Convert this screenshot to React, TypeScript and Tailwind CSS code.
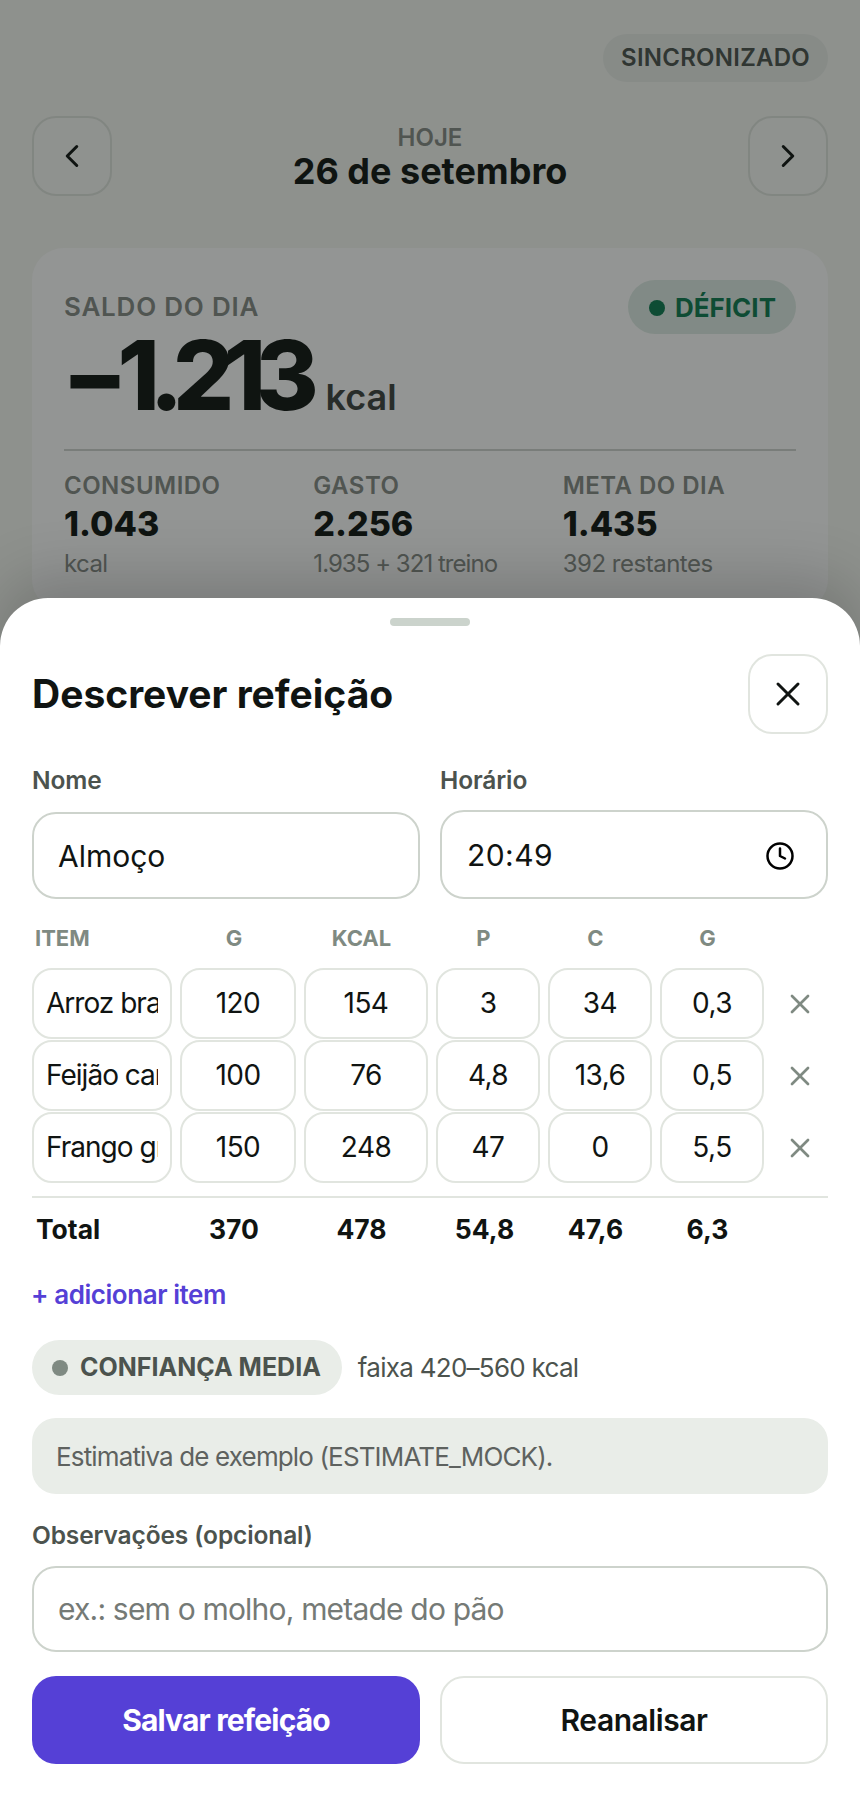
import { ChevronLeft, ChevronRight, Clock, X } from "lucide-react";

const font = "[font-family:Inter,'Liberation_Sans',sans-serif]";

const rows = [
  ["Arroz branco cozido", "120", "154", "3", "34", "0,3"],
  ["Feijão carioca", "100", "76", "4,8", "13,6", "0,5"],
  ["Frango grelhado", "150", "248", "47", "0", "5,5"],
];

const colsClass = "grid grid-cols-[140px_116px_124px_104px_104px_104px_1fr] gap-x-[8px]";

function Stat({ label, value, sub, subClass }: { label: string; value: string; sub: string; subClass: string }) {
  return (
    <div>
      <div className="text-[24px] leading-[30px] font-semibold tracking-[0.02em] text-[#868a86]">{label}</div>
      <div className="mt-[1px] text-[34px] leading-[44px] font-extrabold text-[#101412]">{value}</div>
      <div className={`mt-[3px] text-[24px] leading-[30px] text-[#868a86] ${subClass}`}>{sub}</div>
    </div>
  );
}

export default function App() {
  return (
    <div className={`relative h-[1800px] w-full overflow-hidden bg-[#f6f7f3] ${font}`}>
      <div className="px-[32px] pt-[34px]">
        <div className="flex justify-end">
          <span className="flex h-[48px] items-center rounded-full bg-[#e9ede8] px-[18px] text-[24px] font-semibold tracking-[0.01em] text-[#4c534e]">
            SINCRONIZADO
          </span>
        </div>
        <div className="mt-[34px] flex items-center justify-between">
          <button className="grid h-[80px] w-[80px] place-items-center rounded-[24px] border-2 border-[#dfe3dd] bg-[#f8f9f6] text-[#101412]">
            <ChevronLeft size={38} strokeWidth={1.9} />
          </button>
          <div className="pt-[4px] text-center">
            <div className="text-[24px] leading-[30px] font-semibold text-[#868a86]">HOJE</div>
            <div className="mt-[-4px] text-[36px] leading-[44px] font-bold text-[#101412]">26 de setembro</div>
          </div>
          <button className="grid h-[80px] w-[80px] place-items-center rounded-[24px] border-2 border-[#dfe3dd] bg-[#f8f9f6] text-[#101412]">
            <ChevronRight size={38} strokeWidth={1.9} />
          </button>
        </div>
        <div className="mt-[52px] rounded-[32px] bg-white px-[32px] pt-[32px] pb-[32px]">
          <div className="flex items-start justify-between">
            <div className="pt-[12px] text-[26px] leading-[30px] font-semibold tracking-[0.03em] text-[#868a86]">SALDO DO DIA</div>
            <span className="flex h-[54px] items-center gap-[10px] rounded-full bg-[#dfece5] pr-[20px] pl-[21px] pt-[1px] text-[26px] font-bold text-[#0d7a50]">
              <span className="h-[16px] w-[16px] rounded-full bg-[#0d7a50]" />
              DÉFICIT
            </span>
          </div>
          <div className="mt-[-1px] ml-[-2px] flex items-baseline gap-[17px]">
            <span className="text-[96px] leading-[84px] font-extrabold tracking-[-0.108em] text-[#101412]">−1.213</span>
            <span className="text-[36px] leading-none font-semibold text-[#3d423f]">kcal</span>
          </div>
          <div className="mt-[32px] h-[2px] bg-[#cfd3cf]" />
          <div className="mt-[20px] grid grid-cols-3 gap-x-[16px]">
            <Stat label="CONSUMIDO" value="1.043" sub="kcal" subClass="tracking-[-0.025em]" />
            <Stat label="GASTO" value="2.256" sub="1.935 + 321 treino" subClass="tracking-[-0.04em]" />
            <Stat label="META DO DIA" value="1.435" sub="392 restantes" subClass="tracking-[-0.02em]" />
          </div>
        </div>
      </div>

      {/* scrim over the page */}
      <div className="absolute inset-0 bg-[#0f1512]/45" />

      <div className="absolute inset-x-0 top-[598px] bottom-0 rounded-t-[48px] bg-white px-[32px] shadow-[0_-20px_60px_rgba(0,0,0,0.18)]">
        <div className="mx-auto mt-[20px] h-[8px] w-[80px] rounded-full bg-[#cbd3cc]" />
        <div className="mt-[28px] flex items-center justify-between">
          <h2 className="text-[39px] font-bold text-[#101412]">Descrever refeição</h2>
          <button className="grid h-[80px] w-[80px] place-items-center rounded-[24px] border-2 border-[#e1e5df] bg-white text-[#101412]">
            <X size={40} strokeWidth={1.8} />
          </button>
        </div>

        <div className="mt-[31px] grid grid-cols-2 gap-x-[20px]">
          <div className="flex flex-col">
            <label className="text-[24.5px] leading-[30px] font-semibold tracking-[-0.005em] text-[#4c534e]">Nome</label>
            <input
              readOnly
              value="Almoço"
              className="mt-auto h-[87px] w-full rounded-[24px] border-2 border-[#cdd3cc] bg-white px-[24px] text-[30px] text-[#101412] outline-none"
            />
          </div>
          <div className="flex flex-col">
            <label className="text-[24.5px] leading-[30px] font-semibold tracking-[-0.005em] text-[#4c534e]">Horário</label>
            <div className="relative mt-[15px]">
              <input
                readOnly
                value="20:49"
                className="h-[89px] w-full rounded-[24px] border-2 border-[#cdd3cc] bg-white px-[25px] text-[30px] tracking-[0.015em] text-[#101412] outline-none"
              />
              <Clock size={30} strokeWidth={2} className="absolute top-[31px] right-[33px] text-black" />
            </div>
          </div>
        </div>

        <div className={`${colsClass} mt-[24px] text-[22px] leading-[30px] font-bold text-[#7f8a82]`}>
          <div className="pl-[3px]">ITEM</div>
          <div className="pr-[8px] text-center">G</div>
          <div className="pr-[9px] text-center">KCAL</div>
          <div className="pr-[9px] text-center">P</div>
          <div className="pr-[9px] text-center">C</div>
          <div className="pr-[9px] text-center">G</div>
        </div>

        <div className="mt-[15px] flex flex-col gap-y-[1px]">
          {rows.map((r, i) => (
            <div key={i} className={`${colsClass} items-center`}>
              {r.map((v, j) => (
                <input
                  key={j}
                  readOnly
                  value={v}
                  className={`h-[71px] w-full rounded-[20px] border-2 border-[#e1e5df] bg-white px-[12px] pb-[2px] text-[28px] text-[#101412] outline-none ${j === 0 ? "text-left tracking-[-0.035em]" : "text-center tracking-[-0.02em]"}`}
                />
              ))}
              <div className="grid place-items-center text-[#7f8a82]">
                <X size={32} strokeWidth={2} />
              </div>
            </div>
          ))}
        </div>

        <div className="mt-[13px] h-[2px] bg-[#e1e5df]" />
        <div className={`${colsClass} mt-[15px] text-[26.5px] leading-[32px] font-bold text-[#101412]`}>
          <div className="pl-[4px]">Total</div>
          <div className="pr-[8px] text-center">370</div>
          <div className="pr-[9px] text-center">478</div>
          <div className="pr-[7px] text-center">54,8</div>
          <div className="pr-[9px] text-center">47,6</div>
          <div className="pr-[9px] text-center">6,3</div>
        </div>

        <div className="mt-[33px] ml-[-1px] text-[26px] leading-[34px] font-semibold tracking-[-0.017em] text-[#5540d6]">+ adicionar item</div>

        <div className="mt-[28px] flex items-center gap-[16px]">
          <span className="flex h-[55px] items-center gap-[12px] rounded-full bg-[#e9ede8] pr-[21px] pl-[20px] text-[25px] font-bold text-[#4c534e]">
            <span className="h-[16px] w-[16px] rounded-full bg-[#7f8a82]" />
            CONFIANÇA MEDIA
          </span>
          <span className="text-[26px] tracking-[-0.028em] text-[#4c534e]">faixa 420–560 kcal</span>
        </div>

        <div className="mt-[23px] flex h-[76px] items-center rounded-[24px] bg-[#e9ede8] px-[24px] text-[26px] tracking-[-0.033em] text-[#5e625f]">
          Estimativa de exemplo (ESTIMATE_MOCK).
        </div>

        <label className="mt-[26px] block text-[24.5px] leading-[30px] font-semibold tracking-[-0.005em] text-[#4c534e]">Observações (opcional)</label>
        <input
          readOnly
          placeholder="ex.: sem o molho, metade do pão"
          className="mt-[16px] h-[86px] w-full rounded-[24px] border-2 border-[#cdd3cc] bg-white px-[24px] text-[30px] tracking-[-0.027em] text-[#101412] outline-none placeholder:text-[#757a76]"
        />

        <div className="mt-[24px] grid grid-cols-2 gap-x-[20px]">
          <button className="h-[88px] rounded-[24px] bg-[#5540d6] text-[30px] font-bold tracking-[-0.028em] text-white">Salvar refeição</button>
          <button className="h-[88px] rounded-[24px] border-2 border-[#e1e5df] bg-white text-[30px] font-semibold tracking-[-0.015em] text-[#101412]">Reanalisar</button>
        </div>
      </div>
    </div>
  );
}
